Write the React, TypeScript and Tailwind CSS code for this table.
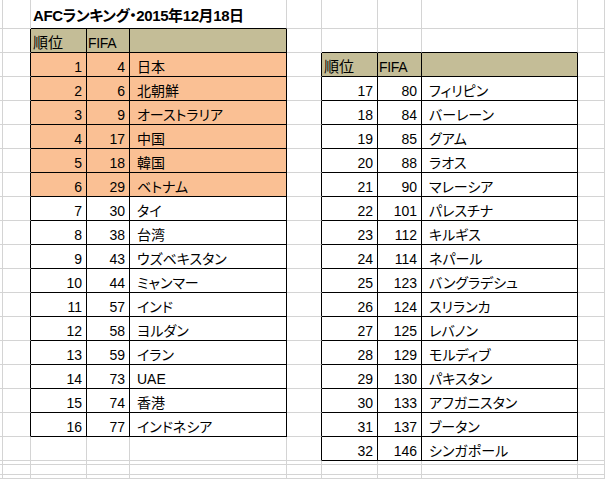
import React from 'react';

type Row = [number, number, string];

const LEFT: Row[] = [
  [1, 4, '日本'],
  [2, 6, '北朝鮮'],
  [3, 9, 'オーストラリア'],
  [4, 17, '中国'],
  [5, 18, '韓国'],
  [6, 29, 'ベトナム'],
  [7, 30, 'タイ'],
  [8, 38, '台湾'],
  [9, 43, 'ウズベキスタン'],
  [10, 44, 'ミャンマー'],
  [11, 57, 'インド'],
  [12, 58, 'ヨルダン'],
  [13, 59, 'イラン'],
  [14, 73, 'UAE'],
  [15, 74, '香港'],
  [16, 77, 'インドネシア'],
];

const RIGHT: Row[] = [
  [17, 80, 'フィリピン'],
  [18, 84, 'バーレーン'],
  [19, 85, 'グアム'],
  [20, 88, 'ラオス'],
  [21, 90, 'マレーシア'],
  [22, 101, 'パレスチナ'],
  [23, 112, 'キルギス'],
  [24, 114, 'ネパール'],
  [25, 123, 'バングラデシュ'],
  [26, 124, 'スリランカ'],
  [27, 125, 'レバノン'],
  [28, 129, 'モルディブ'],
  [29, 130, 'パキスタン'],
  [30, 133, 'アフガニスタン'],
  [31, 137, 'ブータン'],
  [32, 146, 'シンガポール'],
];

const NUM_ROWS = 22;
const NUM_COLS = 10;

// each table: first grid row / col, its rows, and how many top rows are highlighted
const TABLES = [
  { r0: 1, c0: 2, data: LEFT, top: 6 },
  { r0: 2, c0: 6, data: RIGHT, top: 0 },
];

function tableAt(r: number, c: number) {
  for (const t of TABLES) {
    if (r >= t.r0 && r <= t.r0 + t.data.length && c >= t.c0 && c <= t.c0 + 2) {
      return t;
    }
  }
  return null;
}

function Cell({ r, c }: { r: number; c: number }) {
  const t = tableAt(r, c);
  const blackRight = t !== null || tableAt(r, c + 1) !== null;
  const blackBottom = t !== null || tableAt(r + 1, c) !== null;

  let bg = '';
  let content: React.ReactNode = null;
  let align = 'justify-start';
  let pad = '';

  if (t) {
    const i = r - t.r0;
    const k = c - t.c0;
    if (i === 0) {
      bg = 'bg-[#c4bd97]';
      content = k === 0 ? '順位' : k === 1 ? 'FIFA' : null;
      pad = k === 0 ? 'pl-[2px] pb-[1px] text-[15px]' : 'pl-[1px] pb-[1px] tracking-[-0.3px]';
    } else {
      const row = t.data[i - 1];
      if (i <= t.top) bg = 'bg-[#fac094]';
      if (k < 2) {
        content = row[k];
        align = 'justify-end';
        pad = 'pr-[4px] pb-[1px]';
      } else {
        content = row[2];
        pad = 'pl-[7px] pb-[1px] [font-feature-settings:"palt"]';
      }
    }
  }

  return (
    <div
      className={`flex items-end overflow-hidden whitespace-nowrap border-r border-b ${align} ${pad} ${bg} ${
        blackRight ? 'border-r-black' : 'border-r-[#d4d4d4]'
      } ${blackBottom ? 'border-b-black' : 'border-b-[#d4d4d4]'}`}
    >
      {content !== null ? <span className="leading-[16px]">{content}</span> : null}
    </div>
  );
}

export default function App() {
  const cells: React.ReactNode[] = [];
  for (let r = 0; r < NUM_ROWS; r++) {
    for (let c = 0; c < NUM_COLS; c++) {
      if (r === 0 && (c === 3 || c === 4)) continue;
      if (r === 0 && c === 2) {
        // title spills over the next two columns, hiding their gridlines
        cells.push(
          <div
            key="title"
            className="col-span-3 flex items-end border-r border-b border-r-[#d4d4d4] border-b-black pb-[3px] pl-[2px] text-[15px] font-bold leading-[18px] tracking-[-0.4px] [font-feature-settings:'palt']"
          >
            AFCランキング・2015年12月18日
          </div>,
        );
        continue;
      }
      cells.push(<Cell key={`${r}-${c}`} r={r} c={c} />);
    }
  }

  return (
    <div className="h-[479px] w-[605px] overflow-hidden bg-white font-['Liberation_Sans','Noto_Sans_CJK_JP',sans-serif] text-[14px] text-black">
      <div className="grid grid-cols-[3px_28px_56px_43px_157px_35px_56px_44px_156px_1fr] grid-rows-[29px_repeat(18,24px)_4px_10px_4px]">
        {cells}
      </div>
    </div>
  );
}
